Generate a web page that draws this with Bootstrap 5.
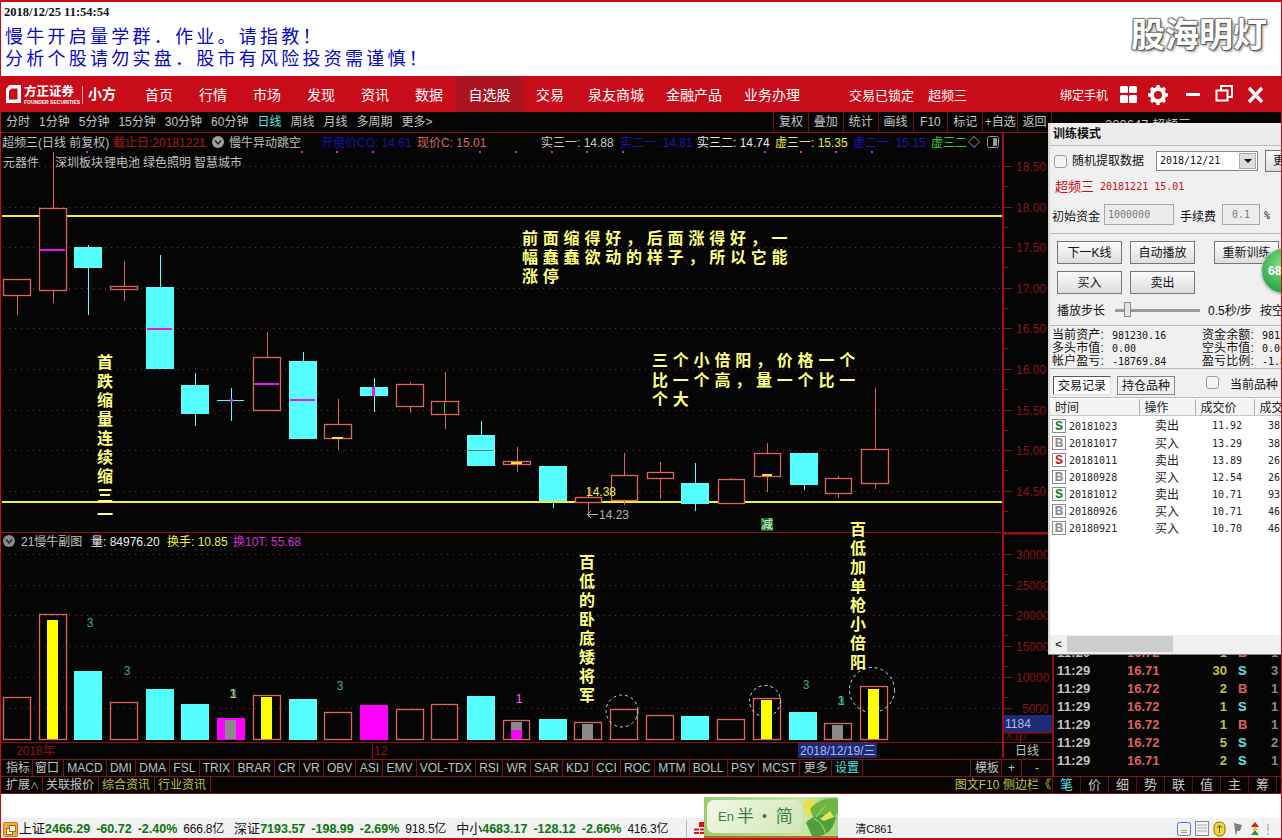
<!DOCTYPE html>
<html lang="zh-CN">

<head>
    <meta charset="UTF-8">
    <meta name="viewport" content="width=device-width, initial-scale=1.0">
    <title>超频三 训练模式</title>
    <link href="https://cdn.jsdelivr.net/npm/bootstrap@5.3.0/dist/css/bootstrap.min.css" rel="stylesheet">
    <script src="https://cdn.jsdelivr.net/npm/bootstrap@5.3.0/dist/js/bootstrap.bundle.min.js"></script>
    <style>
        html, body { margin: 0; background: #fff; }
        body { font-family: "Liberation Sans", "Noto Sans CJK SC", sans-serif; font-size: 12px; overflow: hidden; }
        .app-shell { position: relative; width: 1282px; height: 840px; overflow: hidden; }
        .app-shell::after { content: ""; position: absolute; inset: 0; border: 1px solid #c80d18; border-width: 2px 1px 2px 1px; pointer-events: none; z-index: 9; }

        /* top banner */
        .banner { height: 77px; padding: 5px 0 0 4px; background: #fff; position: relative; }
        .banner-date { font: bold 12.5px/14px "Liberation Serif", serif; color: #111; margin-bottom: 7px; }
        .banner-line { font-size: 18px; line-height: 22px; letter-spacing: 3.25px; color: #0808c0; padding-left: 1px; }
        .banner-mark { position: absolute; right: 15px; top: 11px; font-size: 34px; line-height: 48px; font-weight: 700; color: #fff; text-shadow: 0 0 1px #555, 1px 1px 1px #555, -1px -1px 1px #888, 1px -1px 1px #888, -1px 1px 1px #888, 2px 2px 3px #999; }

        /* red menu */
        .menu-bar { height: 36px; background: #c90c19; padding: 0; color: #fff; flex-wrap: nowrap; align-items: stretch; justify-content: flex-start; }
        .brand-box { width: 132px; display: flex; align-items: center; padding-left: 3px; }
        .menu-item { font-size: 14px; line-height: 39px; height: 36px; padding: 0 13px; color: #fff; }
        .menu-tight { padding: 0 11px; }
        .menu-on { background: #a91420; padding: 0 12.5px; }
        .menu-note { font-size: 13px; line-height: 39px; color: #fff; }
        .note-lock { margin-left: 38px; }
        .note-stock { margin-left: 14px; }
        .menu-icons { position: absolute; left: 1060px; top: 0; height: 36px; }

        /* periods row */
        .period-row { height: 21px; background: #050505; border-bottom: 1px solid #8e1010; color: #c4c4c4; position: relative; }
        .period-left { padding-left: 6px; gap: 9px; line-height: 20px; width: 773px; }
        .period-tools { width: 279px; }
        .period-tools span { width: 35px; line-height: 20px; text-align: center; border-left: 1px solid #7a1010; }
        .period-tools span:last-child { border-right: 1px solid #7a1010; }
        .period-title { margin-left: 53px; font-size: 13px; line-height: 18px; padding-top: 4px; white-space: nowrap; }
        .cyan-text { color: #4fe6e6; }

        /* chart and ticks */
        .work-row { height: 643px; background: #050505; }
        .chart-col { width: 1052px; }
        .chart-svg { display: block; background: #050505; }
        .chart-svg text { font-family: "Liberation Sans", "Noto Sans CJK SC", sans-serif; font-size: 12px; }
        .chart-svg .note-text { font-size: 16px; font-weight: 700; fill: #ffff80; }
        .index-row { height: 17px; border-top: 1px solid #8e1010; color: #c0c0c0; line-height: 16px; background: #050505; }
        .index-row > span { padding: 0 3.2px; border-right: 1px solid #7a1010; white-space: nowrap; }
        .index-row > .idx-first { padding: 0 2px 0 6px; }
        .index-row > .idx-second { padding: 0 4px 0 2px; }
        .index-row > .idx-tpl { margin-left: auto; padding: 0 2px 0 4px; border-left: 1px solid #7a1010; }
        .index-row > .idx-plus { width: 20px; padding: 0; text-align: center; }
        .index-row > .idx-minus { width: 30px; padding: 0; text-align: center; border: 0; }
        .tick-panel { width: 230px; border-left: 2px solid #8e1010; padding: 0 0 6px 3px; font-weight: 700; font-size: 13px; line-height: 18px; }
        .tick-line { display: flex; white-space: nowrap; }
        .tick-time { width: 70px; color: #c4c4c4; letter-spacing: .2px; }
        .tick-price { width: 62px; color: #df6060; }
        .tick-vol { width: 38px; text-align: right; color: #c2c23e; }
        .tick-side { width: 18px; margin-left: 11px; }
        .tick-rest { color: #8a8a8a; margin-left: 15px; }
        .side-b { color: #df6060; }
        .side-s { color: #62e4e4; }

        /* info tabs row */
        .tab-row { height: 18px; background: #050505; border-top: 1px solid #8e1010; border-bottom: 1px solid #8e1010; color: #c4c4c4; line-height: 16px; font-size: 12px; }
        .tab-left > span { padding: 0 4px 0 3px; border-right: 1px solid #7a1010; white-space: nowrap; }
        .tab-left > span:first-child { padding-left: 6px; width: 43px; }
        .tab-caret { font-size: 9px; }
        .olive-text { color: #c2c23e; }
        .tab-f10 { width: 50px; text-align: center; white-space: nowrap; }
        .tab-side { width: 230px; border-left: 1px solid #7a1010; }
        .tab-side > span { width: 28px; text-align: center; font-size: 13px; border-right: 1px solid #5a1010; }

        /* status bar */
        .white-gap { height: 24px; background: #fff; }
        .status-row { height: 22px; background: #f1f1f1; font-size: 12px; line-height: 22px; color: #111; padding: 0 0 0 3px; white-space: nowrap; }
        .status-num { color: #0a760f; font-weight: 700; font-size: 12.5px; margin-right: 6px; }
        .status-amount { margin-right: 10px; letter-spacing: -.2px; }
        .status-name { font-size: 13px; }
        .status-flag { margin-right: 1px; }
        .status-line { width: 1px; height: 18px; background: #bbb; margin: 0 7px 0 8px; }
        .status-last { margin-left: 137px; font-size: 11px; }
        .status-icons { position: absolute; left: 1176px; top: 820px; }

        /* training window */
        .train-win { position: absolute; left: 1048px; top: 123px; width: 234px; height: 531px; background: #f0f0f0; border: 0; border-left: 2px solid #d8d8d8; border-radius: 0; box-shadow: 0 1px 0 #888; overflow: hidden; color: #111; z-index: 3; --bs-card-bg: #f0f0f0; }
        .train-title { height: 23px; line-height: 22px; font-weight: 700; padding-left: 3px; background: #ececec; border-bottom: 1px solid #bdbdbd; font-size: 12px; flex: none; }
        .train-mono { font-family: "DejaVu Sans Mono", monospace; font-size: 10px; }
        .train-date { height: 30px; padding-left: 4px; white-space: nowrap; flex: none; }
        .box-check { width: 13px; height: 13px; margin: 0 5px 0 0; border: 1px solid #9a9a9a; border-radius: 0; background-color: #f4f4f4; flex: none; }
        .date-pick { width: 102px; height: 20px; margin-left: 12px; background: #fff; border: 1px solid #888; position: relative; padding-left: 3px; line-height: 18px; flex: none; }
        .date-arrow { position: absolute; right: 1px; top: 1px; width: 17px; height: 16px; background: #ddd; border: 1px solid #aaa; display: flex; align-items: center; justify-content: center; }
        .date-arrow::after { content: ""; border: 4px solid transparent; border-top: 4px solid #111; margin-top: 4px; }
        .train-stock { height: 22px; padding-left: 5px; line-height: 22px; color: #c80d18; font-size: 13px; gap: 6px; flex: none; }
        .train-fund { height: 36px; padding: 6px 0 0 2px; border-bottom: 1px solid #b8b8b8; white-space: nowrap; flex: none; }
        .fund-input { height: 21px; background: #ececec; border: 1px solid #a8a8a8; color: #777; line-height: 19px; padding-left: 3px; flex: none; }
        .fund-wide { width: 70px; }
        .fund-slim { width: 38px; }
        .fund-gap { margin-left: 6px; }
        .train-btns { padding: 7px 0 0 7px; gap: 7px 8px; width: 240px; flex-wrap: wrap; flex: none; }
        .train-btn.btn { width: 65px; height: 23px; padding: 0; font-size: 12px; line-height: 20px; border: 1px solid #777; border-radius: 0; background: linear-gradient(#fafafa, #dedede); color: #111; flex: none; }
        .train-btn.more-btn { width: 40px; height: 22px; margin-left: 7px; padding-left: 7px; text-align: left; }
        .train-btn-far.btn { margin-left: 11px; }
        .train-slide { height: 32px; padding: 2px 0 0 7px; border-bottom: 1px solid #b8b8b8; white-space: nowrap; flex: none; }
        .slide-track { width: 85px; height: 3px; background: #9a9a9a; margin: 0 8px 0 10px; position: relative; flex: none; }
        .slide-thumb { position: absolute; left: 9px; top: -7px; width: 7px; height: 15px; background: #e4e4e4; border: 1px solid #888; }
        .train-stats { height: 43px; padding: 3px 0 0 2px; line-height: 12px; border-bottom: 1px solid #b8b8b8; white-space: nowrap; display: grid; grid-template-columns: 150px 90px; flex: none; }
        .stat-label { display: inline-block; width: 60px; letter-spacing: .1px; }
        .train-tabs { height: 29px; padding: 7px 0 0 3px; gap: 6px; border-bottom: 1px solid #b8b8b8; flex: none; }
        .tab-btn.btn { width: 58px; height: 19px; padding: 0; font-size: 12px; line-height: 16px; border: 1px solid #888; border-radius: 0; background: #f0f0f0; color: #111; }
        .tab-btn.tab-on { background: #fff; border-color: #555 #ddd #ddd #555; }
        .tab-check { margin-left: 25px; }
        .train-list { height: 237px; background: #fff; overflow: hidden; padding-top: 1px; flex: none; }
        .deal-table { table-layout: fixed; width: 244px; margin: 0; --bs-table-bg: transparent; font-size: 12px; }
        .deal-table th { height: 16px; padding: 0 0 0 5px; font-weight: 400; white-space: nowrap; overflow: hidden; background: #f4f4f4; border-right: 1px solid #b0b0b0; border-bottom: 1px solid #c8c8c8; line-height: 14px; }
        .deal-table td { height: 17px; padding: 0; line-height: 16px; white-space: nowrap; vertical-align: middle; }
        .deal-table tbody tr:first-child td { height: 20px; padding-top: 2px; }
        .col-time { width: 89px; }
        .col-act { width: 56px; }
        .col-price { width: 59px; }
        .col-amount { width: 40px; }
        .deal-table td.deal-act { padding-left: 16px; }
        .deal-table td.deal-num { padding-left: 17px; }
        .deal-table td.deal-amount { padding-left: 14px; }
        .deal-mark { display: inline-flex; width: 14px; height: 14px; margin: 1px 3px 0 2px; border: 1px solid #8d8d8d; align-items: center; justify-content: center; font-weight: 700; font-size: 12px; line-height: 12px; vertical-align: top; color: #888; background: #fff; }
        .mark-green { color: #0a7a14; }
        .mark-red { color: #c80d18; }
        .train-scroll { height: 18px; background: #f0f0f0; display: flex; align-items: center; flex: none; }
        .scroll-left { width: 17px; text-align: center; font-weight: 700; color: #333; font-size: 11px; }
        .scroll-thumb { width: 106px; height: 16px; background: #cdcdcd; }
        .green-ball { position: absolute; left: 212px; top: 126px; width: 44px; height: 44px; border-radius: 50%; background: radial-gradient(circle at 45% 35%, #7ee08c, #2aa745 70%); box-shadow: 0 0 0 1px #ccc, 0 1px 3px #777; color: #fff; font-weight: 700; font-size: 12px; line-height: 44px; padding-left: 6px; }

        /* input method popup */
        .ime-pop { position: absolute; left: 704px; top: 797px; width: 134px; height: 41px; background: linear-gradient(90deg, #9ccb6c, #cbe6a8 75%, #a8d27a); border-bottom: 2px solid #a8762c; overflow: hidden; z-index: 4; }
        .ime-face { position: absolute; left: 3px; top: 3px; width: 95px; height: 33px; border-radius: 7px; background: linear-gradient(135deg, #f1f8e6, #cfe7b5); color: #3e7a4c; line-height: 33px; padding-left: 11px; white-space: nowrap; font-size: 17px; display: flex; gap: 3px; }
        .ime-en { font-size: 13px; }
        .ime-dot { margin: 0 6px 0 5px; font-size: 14px; }
        .ime-leaf { position: absolute; right: 0; top: 0; }
    </style>
</head>

<body>
    <div class="app-shell d-flex flex-column">
        <!-- banner -->
        <div class="banner">
            <div class="banner-date">2018/12/25 11:54:54</div>
            <div class="banner-line">慢牛开启量学群．作业。请指教！</div>
            <div class="banner-line">分析个股请勿实盘．股市有风险投资需谨慎！</div>
            <div class="banner-mark">股海明灯</div>
        </div>

        <!-- menu -->
        <nav class="navbar menu-bar">
            <div class="brand-box">
                <svg width="120" height="26" viewBox="0 0 120 26">
                    <path d="M6.500 4 H18 V22 H3 V8 Z M7.500 8.500 L6 10 V18.500 H14.500 V7.500 H8.500 Z" fill="#fff" fill-rule="evenodd"/>
                    <text x="21" y="15" font-size="12.500" font-weight="700" fill="#fff" font-family="Noto Sans CJK SC">方正证券</text>
                    <text x="21" y="23" font-size="5" font-weight="700" fill="#fff" font-family="Liberation Sans">FOUNDER SECURITIES</text>
                    <rect x="79" y="5" width="1" height="18" fill="#f0b0b0"/>
                    <text x="85" y="18" font-size="14" font-weight="700" fill="#fff" font-family="Noto Sans CJK SC">小方</text>
                </svg>
            </div>
            <span class="menu-item">首页</span>
            <span class="menu-item">行情</span>
            <span class="menu-item">市场</span>
            <span class="menu-item">发现</span>
            <span class="menu-item">资讯</span>
            <span class="menu-item">数据</span>
            <span class="menu-item menu-on">自选股</span>
            <span class="menu-item">交易</span>
            <span class="menu-item menu-tight">泉友商城</span>
            <span class="menu-item menu-tight">金融产品</span>
            <span class="menu-item menu-tight">业务办理</span>
            <span class="menu-note note-lock">交易已锁定</span>
            <span class="menu-note note-stock">超频三</span>
            <div class="menu-icons d-flex align-items-center">
                <span class="text-white pt-1">绑定手机</span>
                <svg class="ms-2" width="156" height="36" viewBox="0 0 156 36">
                    <rect x="4" y="10" width="8" height="7" rx="1.5" fill="#fff"/>
                    <rect x="13" y="10" width="8" height="7" rx="1.5" fill="#fff"/>
                    <rect x="4" y="19" width="8" height="8" rx="1.5" fill="#fff"/>
                    <rect x="13" y="19" width="8" height="8" rx="1.5" fill="#fff"/>
                    <circle cx="42" cy="19" r="6" fill="none" stroke="#fff" stroke-width="4"/>
                    <g stroke="#fff" stroke-width="3.4">
                        <path d="M42 9 V12"/><path d="M42 26 V29"/><path d="M32 19 H35"/><path d="M49 19 H52"/>
                        <path d="M35 12 L37 14"/><path d="M47 24 L49 26"/><path d="M35 26 L37 24"/><path d="M47 14 L49 12"/>
                    </g>
                    <rect x="70" y="17" width="14" height="3" fill="#fff"/>
                    <path d="M105 14 V10 H116 V21 H112 M100.500 14.500 H111.500 V24.500 H100.500 Z" fill="none" stroke="#fff" stroke-width="2"/>
                    <path d="M133 12 L146 26 M146 12 L133 26" stroke="#fff" stroke-width="3.4"/>
                </svg>
            </div>
        </nav>

        <!-- period row -->
        <div class="period-row d-flex">
            <div class="period-left d-flex">
                <span>分时</span><span>1分钟</span><span>5分钟</span><span>15分钟</span><span>30分钟</span><span>60分钟</span>
                <span class="cyan-text">日线</span><span>周线</span><span>月线</span><span>多周期</span><span>更多&gt;</span>
            </div>
            <div class="period-tools d-flex">
                <span>复权</span><span>叠加</span><span>统计</span><span>画线</span><span>F10</span><span>标记</span><span>+自选</span><span>返回</span>
            </div>
            <span class="period-title">300647 超频三</span>
        </div>

        <!-- chart and tick list -->
        <div class="work-row d-flex">
            <div class="chart-col">
                <svg id="chart" class="chart-svg" width="1052" height="626" viewBox="0 134 1052 626">
                    <g id="chart-grid"></g>
                    <g id="chart-bars"></g>

                    <!-- main chart heading -->
                    <text x="2" y="148" fill="#c0c0c0">超频三(日线 前复权)</text>
                    <text x="113" y="148" fill="#b01818">截止日:20181221</text>
                    <circle cx="218" cy="143" r="6" fill="#a0a0a0"/>
                    <path d="M215 141.500 L218 145 L221 141.500" fill="none" stroke="#222" stroke-width="1.400"/>
                    <text x="229" y="148" fill="#c0c0c0">慢牛异动跳空</text>
                    <text x="321" y="148" fill="#1414a8">开盘价CO: 14.61</text>
                    <text x="417" y="148" fill="#d86a6a">现价C: 15.01</text>
                    <text x="541" y="148" fill="#c4c4c4">实三一: 14.88</text>
                    <text x="620" y="148" fill="#1818b8">实二一: 14.81</text>
                    <text x="697" y="148" fill="#e8e8e8">实三二: 14.74</text>
                    <text x="775" y="148" fill="#e8e840">虚三一: 15.35</text>
                    <text x="853" y="148" fill="#1818b8">虚二一: 15.15</text>
                    <text x="931" y="148" fill="#30d030">虚三二</text>
                    <text x="968" y="148" fill="#c0c0c0">◇</text>
                    <rect x="987.500" y="137.500" width="11" height="11" rx="2" fill="none" stroke="#999"/>
                    <rect x="993" y="139" width="4" height="8" fill="#999"/>
                    <text x="3" y="168" fill="#c0c0c0">元器件</text>
                    <text x="55" y="168" fill="#c0c0c0">深圳板块</text>
                    <text x="104" y="168" fill="#c0c0c0">锂电池</text>
                    <text x="143" y="168" fill="#c0c0c0">绿色照明</text>
                    <text x="194" y="168" fill="#c0c0c0">智慧城市</text>

                    <!-- notes on the chart -->
                    <text class="note-text" x="522" y="245" letter-spacing="4.800">前面缩得好，后面涨得好，一</text>
                    <text class="note-text" x="522" y="264" letter-spacing="4.800">幅蠢蠢欲动的样子，所以它能</text>
                    <text class="note-text" x="522" y="283" letter-spacing="4.800">涨停</text>
                    <text class="note-text" x="652" y="367" letter-spacing="4.800">三个小倍阳，价格一个</text>
                    <text class="note-text" x="652" y="387" letter-spacing="4.800">比一个高，量一个比一</text>
                    <text class="note-text" x="652" y="406" letter-spacing="4.800">个大</text>
                    <g id="chart-notes" text-anchor="middle"></g>

                    <text x="586" y="497" fill="#e8e850">14.38</text>
                    <path d="M598 515.500 H588 M591 512 L587.500 515.500 L591 519" fill="none" stroke="#b0b0b0"/>
                    <text x="599" y="520" fill="#b0b0b0">14.23</text>
                    <rect x="761" y="519" width="12" height="13" fill="#126a1c"/>
                    <text x="761" y="530" fill="#e8ffe8" font-size="12">减</text>

                    <!-- sub chart heading -->
                    <circle cx="9" cy="542" r="6" fill="#8a8a8a"/>
                    <path d="M6 540.500 L9 544 L12 540.500" fill="none" stroke="#222" stroke-width="1.400"/>
                    <text x="21" y="547" fill="#c0c0c0">21慢牛副图</text>
                    <text x="91" y="547" fill="#eee">量: 84976.20</text>
                    <text x="167" y="547" fill="#f0f030">换手: 10.85</text>
                    <text x="233" y="547" fill="#d030d0">换10T: 55.68</text>

                    <!-- axis captions -->
                    <text x="16" y="756" fill="#8c1414">2018年</text>
                    <text x="374" y="756" fill="#8c1414">12</text>
                    <rect x="798" y="744" width="79" height="15" fill="#1c2c78"/>
                    <text x="800" y="756" fill="#b0bce8">2018/12/19/三</text>
                    <rect x="1004" y="716" width="48" height="17" fill="#1c2c78"/>
                    <text x="1005" y="729" fill="#b0bce8">1184</text>
                    <text x="1005" y="741" fill="#6a1414">X10</text>
                    <text x="1015" y="756" fill="#c0c0c0">日线</text>
                </svg>
                <div class="index-row d-flex">
                    <span class="idx-first">指标</span><span class="idx-second">窗口</span>
                    <span>MACD</span><span>DMI</span><span>DMA</span><span>FSL</span><span>TRIX</span><span>BRAR</span><span>CR</span><span>VR</span><span>OBV</span><span>ASI</span><span>EMV</span><span>VOL-TDX</span><span>RSI</span><span>WR</span><span>SAR</span><span>KDJ</span><span>CCI</span><span>ROC</span><span>MTM</span><span>BOLL</span><span>PSY</span><span>MCST</span><span>更多</span><span class="cyan-text">设置</span>
                    <span class="idx-tpl">模板</span><span class="idx-plus">+</span><span class="idx-minus">-</span>
                </div>
            </div>
            <aside id="tick-panel" class="tick-panel d-flex flex-column justify-content-end"></aside>
        </div>

        <!-- tabs -->
        <div class="tab-row d-flex">
            <div class="tab-left d-flex">
                <span>扩展<span class="tab-caret">∧</span></span><span>关联报价</span><span class="olive-text">综合资讯</span><span class="olive-text">行业资讯</span>
            </div>
            <div class="d-flex ms-auto">
                <span class="olive-text tab-f10">图文F10</span>
                <span class="olive-text tab-f10">侧边栏《</span>
            </div>
            <div class="tab-side d-flex">
                <span class="cyan-text">笔</span><span>价</span><span>细</span><span>势</span><span>联</span><span>值</span><span>主</span><span>筹</span>
            </div>
        </div>
        <div class="white-gap"></div>

        <!-- status -->
        <div class="status-row d-flex align-items-center position-relative">
            <svg class="status-flag" width="15" height="15" viewBox="0 0 15 15">
                <rect x="0.500" y="0.500" width="14" height="14" rx="1" fill="#eeaa44" stroke="#c98020"/>
                <rect x="3.500" y="6.500" width="6" height="6" fill="#fff3d8" stroke="#a86a10"/>
                <rect x="6.500" y="3.500" width="6" height="6" fill="#fff3d8" stroke="#a86a10"/>
            </svg>
            <span class="status-name">上证</span><span class="status-num">2466.29</span><span class="status-num">-60.72</span><span class="status-num">-2.40%</span><span class="status-amount">666.8亿</span>
            <span class="status-name">深证</span><span class="status-num">7193.57</span><span class="status-num">-198.99</span><span class="status-num">-2.69%</span><span class="status-amount">918.5亿</span>
            <span class="status-name">中小</span><span class="status-num">4683.17</span><span class="status-num">-128.12</span><span class="status-num">-2.66%</span><span class="status-amount">416.3亿</span>
            <span class="status-line"></span>
            <svg width="24" height="18" viewBox="0 0 24 18">
                <rect x="5" y="2" width="15" height="5" fill="#e01010"/>
                <rect x="20" y="2" width="4" height="5" fill="#1e8a2a"/>
                <path d="M0 9.500 H24 M0 13 H24" stroke="#e01010" stroke-width="2" stroke-dasharray="5 1"/>
            </svg>
            <span class="status-last">清C861</span>
        </div>
        <svg class="status-icons" width="96" height="18" viewBox="0 0 96 18">
            <rect x="1.500" y="2.500" width="13" height="13" rx="2" fill="#e8f0fa" stroke="#5a7ab0"/>
            <path d="M5 10.500 H11 M5 12.500 H11" stroke="#d8a020"/>
            <rect x="19.500" y="1.500" width="13" height="14" fill="#f4f4f4" stroke="#888"/>
            <path d="M21 5 H31 M21 8 H31 M21 11 H31" stroke="#aaa"/>
            <rect x="38" y="2" width="11" height="14" rx="5" fill="#f0d830" stroke="#8a7a10"/>
            <path d="M43.500 5 V13 M41 8 L43.500 5 L46 8" fill="none" stroke="#6a5a10"/>
            <path d="M58 3 L66 5 L64 11 L61 11 L60 16 L59 11 Z" fill="#808080"/>
            <path d="M79 2 L83 7 H75 Z" fill="#e01010"/>
            <path d="M79 6 L82 10 H76 Z" fill="#e8c820"/>
            <path d="M79 10 L83 15 H75 Z" fill="#20a030"/>
            <path d="M92 4 V11 M92 13 V15" stroke="#999"/>
        </svg>

        <!-- training window -->
        <div class="card train-win">
            <div class="train-title">训练模式</div>
            <div class="train-date d-flex align-items-center">
                <input class="form-check-input box-check" type="checkbox" aria-label="随机提取数据">
                <span>随机提取数据</span>
                <div class="date-pick train-mono">2018/12/21<span class="date-arrow"></span></div>
                <button type="button" class="btn train-btn more-btn">更</button>
            </div>
            <div class="train-stock d-flex">
                <span>超频三</span><span class="train-mono">20181221</span><span class="train-mono">15.01</span>
            </div>
            <div class="train-fund d-flex align-items-start">
                <span class="pt-1">初始资金</span>
                <span class="fund-input train-mono fund-wide ms-1">1000000</span>
                <span class="pt-1 fund-gap">手续费</span>
                <span class="fund-input train-mono fund-slim fund-gap">&nbsp;0.1</span>
                <span class="pt-1 ms-1 train-mono">%</span>
            </div>
            <div class="train-btns d-flex">
                <button type="button" class="btn train-btn">下一K线</button>
                <button type="button" class="btn train-btn">自动播放</button>
                <button type="button" class="btn train-btn train-btn-far">重新训练</button>
                <button type="button" class="btn train-btn">买入</button>
                <button type="button" class="btn train-btn">卖出</button>
            </div>
            <div class="train-slide d-flex align-items-center">
                <span>播放步长</span>
                <span class="slide-track"><span class="slide-thumb"></span></span>
                <span>0.5秒/步</span>
                <span class="ms-2">按空格</span>
            </div>
            <div class="train-stats">
                <span><span class="stat-label">当前资产:</span><span class="train-mono">981230.16</span></span><span><span class="stat-label">资金余额:</span><span class="train-mono">981230.16</span></span>
                <span><span class="stat-label">多头市值:</span><span class="train-mono">0.00</span></span><span><span class="stat-label">空头市值:</span><span class="train-mono">0.00</span></span>
                <span><span class="stat-label">帐户盈亏:</span><span class="train-mono">-18769.84</span></span><span><span class="stat-label">盈亏比例:</span><span class="train-mono">-1.88</span></span>
            </div>
            <div class="train-tabs d-flex align-items-start">
                <button type="button" class="btn tab-btn tab-on">交易记录</button>
                <button type="button" class="btn tab-btn">持仓品种</button>
                <input class="form-check-input box-check tab-check" type="checkbox" aria-label="当前品种">
                <span>当前品种</span>
            </div>
            <div class="train-list">
                <table class="table table-borderless deal-table">
                    <colgroup><col class="col-time"><col class="col-act"><col class="col-price"><col class="col-amount"></colgroup>
                    <thead>
                        <tr><th>时间</th><th>操作</th><th>成交价</th><th>成交量</th></tr>
                    </thead>
                    <tbody id="deal-body"></tbody>
                </table>
            </div>
            <div class="train-scroll"><span class="scroll-left">&lt;</span><span class="scroll-thumb"></span></div>
            <div class="green-ball">68</div>
        </div>

        <!-- input method -->
        <div class="ime-pop">
            <div class="ime-face"><span class="ime-en">En</span><span>半</span><span class="ime-dot">•</span><span>简</span></div>
            <svg class="ime-leaf" width="38" height="39" viewBox="0 0 38 39">
                <path d="M2 6 L12 0 L16 10 L8 20 Z" fill="#e8e24a"/>
                <path d="M10 12 C18 2 30 0 38 2 V16 C32 22 22 24 14 22 Z" fill="#6fb544"/>
                <path d="M6 26 C12 18 26 16 36 20 C34 30 28 38 20 39 H12 C10 34 8 30 6 26 Z" fill="#4fa03a"/>
                <path d="M20 22 L30 14 L34 20 L24 24 Z" fill="#e4e45a"/>
                <path d="M14 22 C20 24 24 30 26 38 M26 8 L16 20" stroke="#b8dc70" fill="none"/>
            </svg>
        </div>
    </div>

    <script>
        // draw the chart from the measured candles and volume bars
        const RED = '#e0645e', CYAN = '#55ffff', MAG = '#f010f0', YEL = '#ffe020';

        // x0, x1, top, bottom, high, low, kind, mid mark [y, colour]
        const velas = [
            [3, 30, 280, 296, 280, 316, 'r'],
            [39, 66, 209, 291, 153, 304, 'r', [250, MAG]],
            [74, 101, 248, 268, 246, 316, 'c'],
            [110, 137, 287, 290, 262, 302, 'r'],
            [146, 173, 288, 369, 256, 369, 'c', [329, MAG]],
            [181, 208, 386, 414, 374, 427, 'c'],
            [217, 244, 401, 401, 389, 422, 'x'],
            [253, 280, 358, 411, 333, 411, 'r', [384, MAG]],
            [289, 316, 362, 439, 353, 439, 'c', [400, MAG]],
            [324, 351, 425, 439, 400, 451, 'r', [438, YEL]],
            [360, 387, 388, 396, 379, 413, 'c'],
            [396, 423, 385, 407, 383, 414, 'r'],
            [431, 458, 402, 415, 373, 430, 'r'],
            [467, 494, 436, 466, 422, 467, 'c', [451, '#777']],
            [503, 530, 462, 465, 448, 473, 'r', [463, YEL]],
            [539, 566, 467, 501, 467, 509, 'c'],
            [575, 601, 498, 503, 488, 518, 'r'],
            [611, 637, 476, 501, 454, 506, 'r'],
            [647, 673, 473, 479, 463, 500, 'r'],
            [681, 708, 484, 504, 464, 512, 'c'],
            [718, 744, 480, 504, 479, 504, 'r'],
            [754, 780, 454, 477, 444, 493, 'r', [475, YEL]],
            [790, 817, 454, 485, 454, 491, 'c'],
            [825, 851, 479, 494, 477, 499, 'r'],
            [861, 888, 450, 484, 389, 490, 'r']
        ];

        // x0, x1, top, kind, inner colour, inner top
        const AMA = '#ffff00', GRIS = '#8a8a8a';
        const barras = [
            [3, 30, 698, 'r'], [39, 66, 615, 'r', AMA, 621], [74, 101, 672, 'c'], [110, 137, 703, 'r'],
            [146, 173, 690, 'c'], [181, 208, 705, 'c'], [217, 244, 719, 'm', GRIS, 721], [253, 280, 696, 'r', AMA, 698],
            [289, 316, 700, 'c'], [324, 351, 713, 'r'], [360, 387, 706, 'm'], [396, 423, 710, 'r'],
            [431, 457, 705, 'r'], [467, 494, 697, 'c'], [503, 529, 721, 'r', GRIS, 723], [539, 566, 720, 'c'],
            [574, 601, 723, 'r', GRIS, 725], [610, 637, 710, 'r'], [646, 673, 716, 'r'], [681, 708, 717, 'c'],
            [717, 744, 720, 'r'], [753, 780, 699, 'r', AMA, 701], [789, 816, 713, 'c'], [824, 851, 724, 'r', GRIS, 726],
            [860, 887, 687, 'r', AMA, 690]
        ];

        const notasVert = [
            [105, 363, '首跌缩量连续缩三一'],
            [587, 563, '百低的卧底矮将军'],
            [858, 530, '百低加单枪小倍阳']
        ];

        function linea(x1, y1, x2, y2, color, extra) {
            return `<line x1="${x1}" y1="${y1}" x2="${x2}" y2="${y2}" stroke="${color}" ${extra || ''}/>`;
        }

        function caja(x, y, w, h, kind) {
            if (kind === 'r') {
                return `<rect x="${x + .5}" y="${y + .5}" width="${w}" height="${h}" fill="none" stroke="${RED}" stroke-width="1.300"/>`;
            }
            const fill = kind === 'm' ? '#ff00ff' : CYAN;
            return `<rect x="${x}" y="${y}" width="${w + 1}" height="${h + 1}" fill="${fill}"/>`;
        }

        let grid = '';
        [167, 208, 248, 289, 329, 370, 411, 451, 492, 555, 586, 616, 647, 678, 709].forEach(y => {
            grid += linea(3, y + .5, 1002, y + .5, '#8a2a20', 'stroke-dasharray="1 5"');
        });
        [[167, '18.50'], [208, '18.00'], [248, '17.50'], [289, '17.00'], [329, '16.50'], [370, '16.00'], [411, '15.50'], [451, '15.00'], [492, '14.50'],
         [555, '30000'], [586, '25000'], [616, '20000'], [647, '15000'], [678, '10000'], [709, '5000']].forEach(([y, t]) => {
            grid += linea(1004, y + .5, 1012, y + .5, '#8e1414');
            grid += linea(1004, y + 20.5, 1008, y + 20.5, '#8e1414');
            grid += `<text x="${t.length === 4 ? 1022 : 1016}" y="${y + 5}" fill="#8c1414" font-size="12">${t}</text>`;
        });
        // frame lines
        grid += linea(1003, 134, 1003, 759, '#a01010', 'stroke-width="2"');
        grid += linea(0, 533.5, 1052, 533.5, '#8e1010');
        grid += linea(1003, 534.5, 1052, 534.5, '#a01010', 'stroke-width="2"');
        grid += linea(0, 743.5, 1052, 743.5, '#8e1010');
        grid += linea(372.5, 744, 372.5, 759, '#8e1010');
        grid += linea(1004, 733.5, 1052, 733.5, '#8e1010', 'stroke-width="2"');
        grid += linea(1020.5, 733, 1020.5, 743, '#8e1010');
        document.getElementById('chart-grid').innerHTML = grid;

        let figuras = '';
        // small marks along the top of the chart
        [87, 302, 337, 373, 480, 516, 552, 587, 623, 765, 801, 836, 872].forEach(x => {
            figuras += `<rect x="${x - 1}" y="152" width="2" height="2" fill="#d820d8"/>`;
        });
        figuras += `<rect x="2" y="216" width="1000" height="2" fill="#f0f030"/>`;
        figuras += `<rect x="2" y="502" width="1000" height="2" fill="#f0f030"/>`;

        velas.forEach(([x0, x1, top, bot, hi, lo, kind, mid]) => {
            const cx = Math.round((x0 + x1) / 2) + .5;
            const color = kind === 'r' ? RED : CYAN;
            figuras += linea(cx, hi, cx, lo, color);
            if (kind === 'x') {
                figuras += linea(x0, top + .5, x1, top + .5, CYAN);
                figuras += `<rect x="${cx - 1.5}" y="${top - 1}" width="3" height="3" fill="${MAG}"/>`;
            } else {
                if (kind === 'r') {
                    figuras += `<rect x="${x0 + 1}" y="${top + 1}" width="${x1 - x0 - 1}" height="${bot - top - 1}" fill="#050505"/>`;
                }
                figuras += caja(x0, top, x1 - x0, bot - top, kind);
            }
            if (mid) {
                const thick = mid[1] === '#777' ? 1 : 2;
                const pad = mid[1] === YEL ? 8 : 1;
                figuras += `<rect x="${x0 + pad}" y="${mid[0]}" width="${x1 - x0 - pad * 2}" height="${thick}" fill="${mid[1]}"/>`;
            }
        });
        figuras += `<rect x="372" y="388" width="3" height="9" fill="${MAG}"/><rect x="444" y="403" width="1" height="12" fill="#30d030"/>`;

        barras.forEach(([x0, x1, top, kind, inner, innerTop]) => {
            figuras += caja(x0, top, x1 - x0, 740 - top, kind);
            if (inner) {
                figuras += `<rect x="${x0 + 8}" y="${innerTop}" width="11" height="${740 - innerTop}" fill="${inner}"/>`;
            }
        });
        figuras += `<rect x="511" y="731" width="11" height="9" fill="#ff00ff"/>`;
        document.getElementById('chart-bars').innerHTML = figuras;

        // dashed circles and small digits
        let notas = '';
        [[622, 712, 16], [765, 702, 15.5], [872, 691, 22.5]].forEach(([cx, cy, r]) => {
            notas += `<circle cx="${cx}" cy="${cy}" r="${r}" fill="none" stroke="#b0e8e8" stroke-dasharray="3 3"/>`;
        });
        [[90, 628], [127, 676], [340, 691], [806, 690], [233, 699], [841, 706]].forEach(([x, y]) => {
            notas += `<text x="${x}" y="${y}" fill="#3aa8a8">3</text>`;
        });
        [[233, 699, '#d8d850'], [841, 706, '#40d060'], [519, 704, '#ff60ff']].forEach(([x, y, c]) => {
            notas += `<text x="${x}" y="${y}" fill="${c}">1</text>`;
        });
        notasVert.forEach(([x, y, txt]) => {
            [...txt].forEach((ch, i) => {
                notas += `<text class="note-text" x="${x}" y="${y + i * 19 + 6}">${ch}</text>`;
            });
        });
        document.getElementById('chart-notes').innerHTML = notas;

        // tick list
        const ticks = [
            ['16.72', '1', 'B', '1'], ['16.71', '30', 'S', '3'], ['16.72', '2', 'B', '1'],
            ['16.72', '1', 'S', '1'], ['16.72', '1', 'B', '1'], ['16.72', '5', 'S', '2'], ['16.71', '2', 'S', '1']
        ];
        document.getElementById('tick-panel').innerHTML = ticks.map(t => `
            <div class="tick-line">
                <span class="tick-time">11:29</span><span class="tick-price">${t[0]}</span><span class="tick-vol">${t[1]}</span>
                <span class="tick-side ${t[2] === 'B' ? 'side-b' : 'side-s'}">${t[2]}</span><span class="tick-rest">${t[3]}</span>
            </div>`).join('');

        // deal records
        const operaciones = [
            ['S', 'mark-green', '20181023', '卖出', '11.92', '38'],
            ['B', '', '20181017', '买入', '13.29', '38'],
            ['S', 'mark-red', '20181011', '卖出', '13.89', '26'],
            ['B', '', '20180928', '买入', '12.54', '26'],
            ['S', 'mark-green', '20181012', '卖出', '10.71', '93'],
            ['B', '', '20180926', '买入', '10.71', '46'],
            ['B', '', '20180921', '买入', '10.70', '46']
        ];
        document.getElementById('deal-body').innerHTML = operaciones.map(o => `
            <tr>
                <td><span class="deal-mark ${o[1]}">${o[0]}</span><span class="train-mono">${o[2]}</span></td>
                <td class="deal-act">${o[3]}</td>
                <td class="deal-num train-mono">${o[4]}</td>
                <td class="deal-amount train-mono">${o[5]}</td>
            </tr>`).join('');
    </script>
</body>

</html>
